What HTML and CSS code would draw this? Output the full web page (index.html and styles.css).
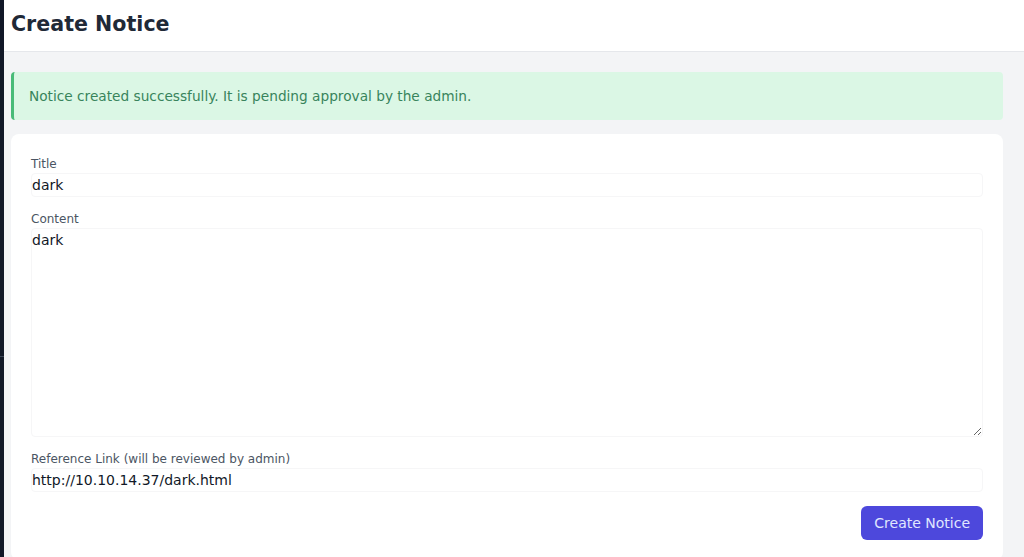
FILE: index.html
```html
<!DOCTYPE html>
<html lang="en">
<head>
  <meta charset="UTF-8" />
  <meta name="viewport" content="width=device-width, initial-scale=1.0" />
  <title>Create Notice</title>
  <link rel="stylesheet" href="styles.css">
</head>
<body>
  <div class="layout">
    <aside class="sidebar">
      <div class="sidebar-top"></div>
      <div class="sidebar-rule"></div>
    </aside>
    <main class="main">
      <header class="topbar">
        <h1>Create Notice</h1>
      </header>
      <section class="content">
        <div class="alert">Notice created successfully. It is pending approval by the admin.</div>
        <form class="card">
          <label class="field-label" for="title">Title</label>
          <input class="field" id="title" type="text" value="dark" />

          <label class="field-label" for="content">Content</label>
          <textarea class="field area" id="content">dark</textarea>

          <label class="field-label" for="link">Reference Link (will be reviewed by admin)</label>
          <input class="field" id="link" type="text" value="http://10.10.14.37/dark.html" />

          <div class="actions">
            <button type="button" class="btn">Create Notice</button>
          </div>
        </form>
      </section>
    </main>
  </div>
</body>
</html>
```

FILE: styles.css
```css
* { box-sizing: border-box; }
html, body {
  margin: 0;
  height: 100%;
  overflow: hidden;
}
body {
  font-family: 'DejaVu Sans', Verdana, sans-serif;
  background: #f3f4f6;
  color: #111827;
}
.layout {
  display: flex;
  height: 100vh;
}
/* Sidebar (mostly off screen) */
.sidebar {
  width: 4px;
  flex-shrink: 0;
  background: #111827;
  display: flex;
  flex-direction: column;
}
.sidebar-top { height: 356px; }
.sidebar-rule { height: 1px; background: #3b4556; }

.main {
  flex: 1;
  display: flex;
  flex-direction: column;
  min-width: 0;
}
.topbar {
  background: #fff;
  height: 52px;
  flex-shrink: 0;
  border-bottom: 1px solid #e5e7eb;
  padding: 0 7px;
  display: flex;
  align-items: center;
}
.topbar h1 {
  margin: 0 0 4px;
  font-size: 20.6px;
  font-weight: bold;
  color: #1f2937;
}
.content {
  padding: 20px 21px 0 7px;
}
.alert {
  background: #dbf7e5;
  border-left: 3px solid #48bb78;
  border-radius: 4px;
  color: #38845c;
  font-size: 13.7px;
  line-height: 16px;
  padding: 16px 15px;
  margin-bottom: 14px;
}
.card {
  background: #fff;
  border-radius: 8px;
  padding: 20px;
  display: flex;
  flex-direction: column;
}
.field-label {
  font-size: 12px;
  line-height: 17px;
  color: #4b5563;
  padding-top: 2px;
}
.field {
  font-family: inherit;
  font-size: 14px;
  line-height: 20px;
  color: #111827;
  background: #fff;
  border: 1px solid #f6f6f7;
  border-radius: 4px;
  padding: 1px 0;
  margin: 0 0 12px;
  outline: none;
  width: 100%;
}
.area {
  height: 209px;
  resize: vertical;
}
.actions {
  display: flex;
  justify-content: flex-end;
  padding-top: 2px;
}
.btn {
  background: #4d48dc;
  color: #e0e7ff;
  border: none;
  border-radius: 6px;
  font-family: inherit;
  font-size: 14px;
  height: 34px;
  padding: 0 13px;
  cursor: pointer;
}
```
